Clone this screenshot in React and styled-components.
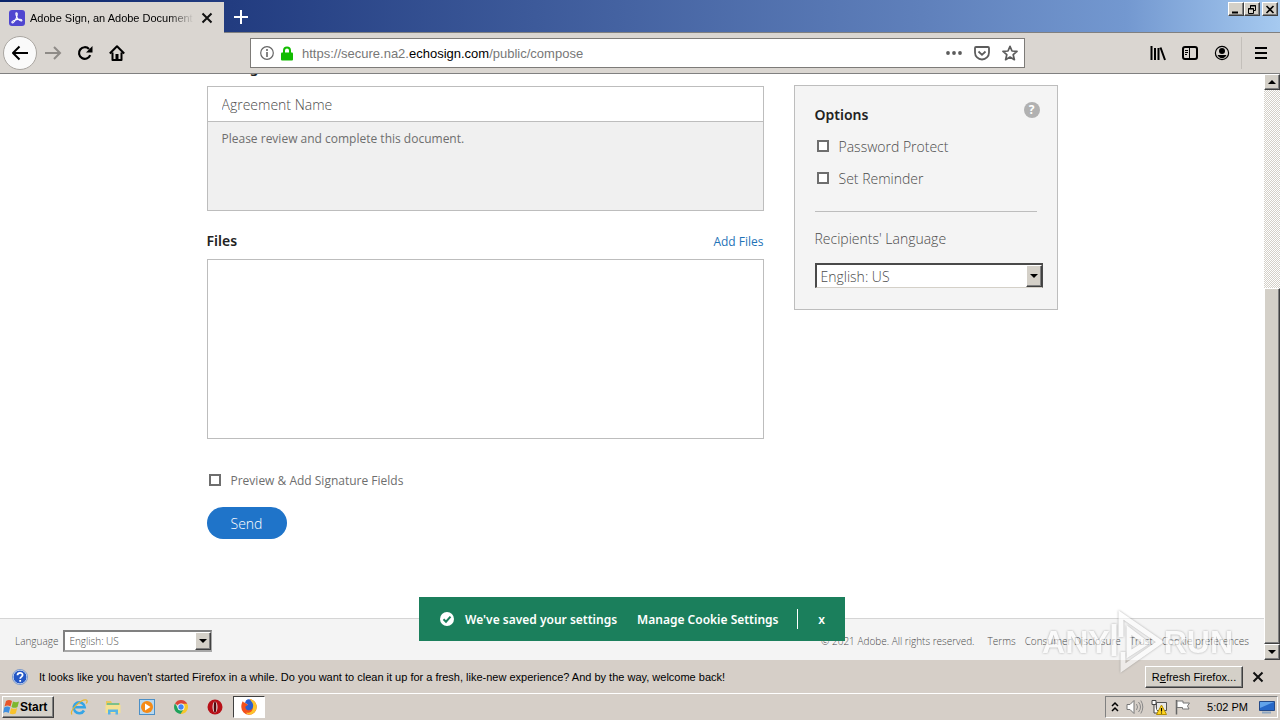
import React from "react";
import styled, { createGlobalStyle } from "styled-components";

const App = () => {
  return (
    <>
      <GlobalStyle />
      <Screen>
        <TitleBar>
          <Tab>
            <svg width="16" height="16" viewBox="0 0 16 16" aria-hidden="true">
              <rect width="16" height="16" rx="3" fill="#4f46d0" />
              <path
                d="M7.300 2.800c1.600 0 1 3.200-.3 5.900-1.200 2.400-2.700 4.600-3.900 4.100-1.100-.8 1.400-2.600 4.300-3.200 2.700-.6 5.400-.4 5.500.7.1 1.300-2.300.6-3.900-1.300C7.400 7.200 6.200 2.900 7.300 2.800z"
                fill="none"
                stroke="#fff"
                strokeWidth="1.100"
              />
            </svg>
            <TabTitle>Adobe Sign, an Adobe Document Cloud</TabTitle>
            <IconButton aria-label="Close tab" $size={16}>
              <CrossIcon />
            </IconButton>
          </Tab>
          <IconButton aria-label="New tab" $size={34}>
            <svg width="16" height="16" viewBox="0 0 16 16">
              <path d="M8 1v14M1 8h14" stroke="#fff" strokeWidth="2" />
            </svg>
          </IconButton>
          <WindowButtons>
            <WindowButton aria-label="Minimize">
              <svg width="10" height="9" viewBox="0 0 10 9">
                <path d="M1 7.500h6" stroke="#000" strokeWidth="2" />
              </svg>
            </WindowButton>
            <WindowButton aria-label="Restore">
              <svg width="10" height="9" viewBox="0 0 10 9">
                <path
                  d="M3.500 3V.5h5v5H7M3 1h6M1.500 3.500h5v5h-5zM1 4h6"
                  fill="none"
                  stroke="#000"
                />
              </svg>
            </WindowButton>
            <WindowButton aria-label="Close" $last>
              <svg width="10" height="9" viewBox="0 0 10 9">
                <path d="M1.500 1l7 7M8.500 1l-7 7" stroke="#000" strokeWidth="1.600" />
              </svg>
            </WindowButton>
          </WindowButtons>
        </TitleBar>

        <NavBar>
          <BackButton aria-label="Back">
            <svg width="18" height="18" viewBox="0 0 18 18">
              <path
                d="M17 9H2M8.500 2.500L2 9l6.500 6.500"
                fill="none"
                stroke="#000"
                strokeWidth="2"
                strokeLinejoin="round"
              />
            </svg>
          </BackButton>
          <IconButton aria-label="Forward" $size={32}>
            <svg width="18" height="18" viewBox="0 0 18 18">
              <path
                d="M1 9h15M10 3l6 6-6 6"
                fill="none"
                stroke="#8e8b87"
                strokeWidth="2"
              />
            </svg>
          </IconButton>
          <IconButton aria-label="Reload" $size={32}>
            <svg width="16" height="16" viewBox="0 0 16 16">
              <path
                d="M13.200 10.200A5.800 5.800 0 1 1 12 4"
                fill="none"
                stroke="#000"
                strokeWidth="2.200"
              />
              <path d="M15.500 1v6.500H9z" fill="#000" />
            </svg>
          </IconButton>
          <IconButton aria-label="Home" $size={32}>
            <svg width="16" height="16" viewBox="0 0 16 16">
              <path
                d="M.8 8.500L8 1.300l7.200 7.200M3.500 7.500V15h9V7.500"
                fill="none"
                stroke="#000"
                strokeWidth="2"
                strokeLinejoin="round"
              />
              <path d="M6.500 9h3v6h-3z" fill="#000" />
            </svg>
          </IconButton>
          <UrlBar>
            <svg width="14" height="14" viewBox="0 0 14 14" aria-hidden="true">
              <circle cx="7" cy="7" r="6.300" fill="none" stroke="#666" strokeWidth="1.200" />
              <path d="M7 6v5M7 3v2" stroke="#666" strokeWidth="1.600" />
            </svg>
            <svg width="14" height="15" viewBox="0 0 14 15" aria-hidden="true">
              <path d="M4 7V4.500a3 3 0 0 1 6 0V7" fill="none" stroke="#12bc00" strokeWidth="2" />
              <rect x="1" y="6.500" width="12" height="8" rx="1" fill="#12bc00" />
            </svg>
            <Url>
              https://secure.na2.<b>echosign.com</b>/public/compose
            </Url>
            <svg width="18" height="16" viewBox="0 0 18 16" aria-hidden="true">
              <g fill="#5c5c5c">
                <circle cx="4" cy="8" r="1.900" />
                <circle cx="10" cy="8" r="1.900" />
                <circle cx="16" cy="8" r="1.900" />
              </g>
            </svg>
            <svg width="16" height="16" viewBox="0 0 16 16" aria-hidden="true">
              <path
                d="M2 2h12a1 1 0 0 1 1 1v4.500a7 7 0 0 1-14 0V3a1 1 0 0 1 1-1zM4.500 6.500L8 9.800l3.500-3.300"
                fill="none"
                stroke="#5c5c5c"
                strokeWidth="1.800"
              />
            </svg>
            <svg width="16" height="16" viewBox="0 0 16 16" aria-hidden="true">
              <path
                d="M8 1.300l2 4.700 5 .4-3.800 3.300 1.200 5L8 12l-4.400 2.700 1.200-5L1 6.400 6 6z"
                fill="none"
                stroke="#5c5c5c"
                strokeWidth="1.700"
                strokeLinejoin="round"
              />
            </svg>
          </UrlBar>
          <NavTools>
            <IconButton aria-label="Library" $size={32}>
              <svg width="16" height="16" viewBox="0 0 16 16">
                <path d="M1.500 1v14M5 3v12M8.500 3v12M10.500 2.500L15 15" stroke="#000" strokeWidth="2" />
              </svg>
            </IconButton>
            <IconButton aria-label="Sidebars" $size={32}>
              <svg width="16" height="16" viewBox="0 0 16 16">
                <rect x="1" y="2" width="14" height="12" rx="2" fill="none" stroke="#000" strokeWidth="2" />
                <path d="M7.500 2v12" stroke="#000" />
                <path d="M3 5.500h3M3 7.500h3M3 9.500h2" stroke="#000" />
              </svg>
            </IconButton>
            <IconButton aria-label="Account" $size={32}>
              <svg width="16" height="16" viewBox="0 0 16 16">
                <circle cx="8" cy="8" r="6.600" fill="none" stroke="#000" strokeWidth="1.200" />
                <circle cx="8" cy="6" r="3" fill="#000" />
                <path d="M3.500 10h9c-.8 2-2.500 3.200-4.500 3.200S4.300 12 3.500 10z" fill="#000" />
              </svg>
            </IconButton>
            <NavDivider />
            <IconButton aria-label="Open menu" $size={32}>
              <svg width="14" height="14" viewBox="0 0 14 14">
                <path d="M1 2h12M1 7h12M1 12h12" stroke="#000" strokeWidth="2" />
              </svg>
            </IconButton>
          </NavTools>
        </NavBar>

        <Viewport>
          <Page>
            <Compose>
              <Column>
                <Heading>Message</Heading>
                <MessageBox>
                  <NameInput aria-label="Agreement Name" placeholder="Agreement Name" />
                  <MessageInput
                    aria-label="Message"
                    defaultValue="Please review and complete this document."
                  />
                </MessageBox>
                <FilesHeader>
                  <Heading>Files</Heading>
                  <AddLink href="#files">Add Files</AddLink>
                </FilesHeader>
                <FileDrop id="files" />
                <PreviewLabel>
                  <Checkbox type="checkbox" />
                  Preview &amp; Add Signature Fields
                </PreviewLabel>
                <SendButton>Send</SendButton>
              </Column>
              <Options>
                <OptionsHeader>
                  <Heading>Options</Heading>
                  <HelpButton aria-label="Help">?</HelpButton>
                </OptionsHeader>
                <OptionLabel>
                  <Checkbox type="checkbox" />
                  Password Protect
                </OptionLabel>
                <OptionLabel>
                  <Checkbox type="checkbox" />
                  Set Reminder
                </OptionLabel>
                <Rule />
                <FieldLabel htmlFor="recipient-language">Recipients' Language</FieldLabel>
                <SelectBox $large>
                  <select id="recipient-language">
                    <option>English: US</option>
                  </select>
                  <Arrow />
                </SelectBox>
              </Options>
            </Compose>
            <Footer>
              <label htmlFor="language">Language</label>
              <SelectBox>
                <select id="language">
                  <option>English: US</option>
                </select>
                <Arrow />
              </SelectBox>
              <Legal>
                <span>© 2021 Adobe. All rights reserved.</span>
                <a href="#terms">Terms</a>
                <a href="#disclosure">Consumer Disclosure</a>
                <a href="#trust">Trust</a>
                <a href="#cookies">Cookie preferences</a>
              </Legal>
            </Footer>
            <Toast>
              <svg width="14" height="14" viewBox="0 0 14 14" aria-hidden="true">
                <circle cx="7" cy="7" r="7" fill="#fff" />
                <path d="M3.500 7.200L6 9.700l4.500-5" fill="none" stroke="#1b7f5c" strokeWidth="2" />
              </svg>
              <span>We've saved your settings</span>
              <a href="#cookie-settings">Manage Cookie Settings</a>
              <ToastClose aria-label="Close">x</ToastClose>
            </Toast>
          </Page>
          <Scrollbar>
            <ScrollButton aria-label="Scroll up">
              <Triangle $up />
            </ScrollButton>
            <ScrollTrack />
            <ScrollThumb />
            <ScrollButton aria-label="Scroll down">
              <Triangle />
            </ScrollButton>
          </Scrollbar>
        </Viewport>

        <Notice>
          <svg width="16" height="16" viewBox="0 0 16 16" aria-hidden="true">
            <circle cx="8" cy="8" r="7" fill="#2457c5" stroke="#d9e5f8" />
            <circle cx="8" cy="8" r="7.600" fill="none" stroke="#6c8fc8" strokeWidth=".8" />
            <path
              d="M5.500 6.300c0-3.400 5.200-3.200 5.100-.2 0 1.900-2.400 1.700-2.400 3.700M8.200 11v1.800"
              fill="none"
              stroke="#fff"
              strokeWidth="1.800"
            />
          </svg>
          <NoticeText>
            It looks like you haven't started Firefox in a while. Do you want to clean it up for a
            fresh, like-new experience? And by the way, welcome back!
          </NoticeText>
          <RefreshButton>
            R<u>e</u>fresh Firefox...
          </RefreshButton>
          <IconButton aria-label="Dismiss" $size={30}>
            <CrossIcon />
          </IconButton>
        </Notice>

        <Taskbar>
          <StartButton>
            <svg width="17" height="16" viewBox="0 0 17 16" aria-hidden="true">
              <path d="M3 2q3-2 6 0L7.500 7.500q-3-1.800-6 0z" fill="#e8562a" />
              <path d="M10 2.500q3 1.600 6 0L14.500 8q-3 1.700-6 0z" fill="#7db72f" />
              <path d="M1.200 8.500q3-1.800 6 0L5.700 14q-3-1.800-5.500 0z" fill="#3f8fe0" />
              <path d="M8.200 9q3 1.700 6 0l-1.500 5.500q-3 1.600-6 0z" fill="#f8c22c" />
            </svg>
            Start
          </StartButton>
          <TaskButton aria-label="Internet Explorer">
            <svg width="18" height="18" viewBox="0 0 18 18">
              <path
                d="M14 12.500A5.500 5.500 0 1 1 14.700 9.300H5"
                fill="none"
                stroke="#35a5e6"
                strokeWidth="2.600"
              />
              <path
                d="M2 16.500C-1 13 11 .5 16.500 2c1 .5.800 2-.2 3.500"
                fill="none"
                stroke="#e8b62c"
                strokeWidth="1.200"
              />
            </svg>
          </TaskButton>
          <TaskButton aria-label="Explorer">
            <svg width="18" height="18" viewBox="0 0 18 18">
              <path d="M2 3h5l1 2h8v9H2z" fill="#e9c95c" />
              <path d="M3 5h12v4H3z" fill="#7cc08a" />
              <path d="M1.500 7h15v8h-15z" fill="#f5e191" />
              <path d="M4 16.500v-5h10v5h-2.500V14h-5v2.500z" fill="#58b4e4" />
            </svg>
          </TaskButton>
          <TaskButton aria-label="Media Player">
            <svg width="18" height="18" viewBox="0 0 18 18">
              <rect x="1.500" y="1.500" width="15" height="15" fill="#b8d8ef" stroke="#4c8fc6" />
              <circle cx="9" cy="9" r="6" fill="#f58a16" />
              <path d="M7 5.500l5.500 3.500L7 12.500z" fill="#fff" />
            </svg>
          </TaskButton>
          <TaskButton aria-label="Chrome">
            <svg width="18" height="18" viewBox="0 0 18 18">
              <path d="M9 9L3 5.500A7 7 0 0 1 15.200 5.800z" fill="#db4437" />
              <path d="M9 9L9 5.800h6.200A7 7 0 0 1 8.500 16z" fill="#f6c72c" />
              <path d="M3 5.500L6.500 11l5 .5L8.500 16A7 7 0 0 1 3 5.500z" fill="#1fa25b" />
              <circle cx="9" cy="9" r="3.500" fill="#fff" />
              <circle cx="9" cy="9" r="2.700" fill="#4285f4" />
            </svg>
          </TaskButton>
          <TaskButton aria-label="Opera">
            <svg width="18" height="18" viewBox="0 0 18 18">
              <circle cx="9" cy="9" r="7.500" fill="#b81018" />
              <ellipse cx="9" cy="9" rx="2.500" ry="5.500" fill="#e8dcdc" />
              <ellipse cx="9" cy="9" rx="1.300" ry="5.500" fill="#51080c" />
            </svg>
          </TaskButton>
          <TaskButton aria-label="Firefox" $active>
            <svg width="18" height="18" viewBox="0 0 18 18">
              <path
                d="M3 3c0 1 .8 1.500 2 1.800L8 6.500 10 1c4 .8 6.700 4 6.700 8a7.700 7.700 0 0 1-15.400 0C1.300 6.500 1.800 4.500 3 3z"
                fill="#f3501c"
              />
              <path
                d="M10 1c4 .8 6.700 4 6.700 8 0 3-2 6-5 7.200-3 .8-5-.2-6-1.700 4 1 7-1 7-4.500 0-2.500-1-3.500-2-4.500z"
                fill="#fcc52c"
              />
              <path
                d="M6 2.500C8 .8 10 1 11 3c2 2 2.500 4 2 6-.6 2.500-3 3.700-5 3.200-2-.5-3-2-2.500-3.700l2.800-1.700L5 4.800z"
                fill="#2b5fd0"
              />
            </svg>
          </TaskButton>
          <Tray>
            <svg width="8" height="12" viewBox="0 0 8 12" aria-hidden="true">
              <path d="M1 5l3-3 3 3M1 10l3-3 3 3" fill="none" stroke="#000" strokeWidth="1.500" />
            </svg>
            <svg width="18" height="16" viewBox="0 0 18 16" aria-hidden="true">
              <path d="M1 5.500h3l4-4v13l-4-4H1z" fill="#fff" stroke="#777" />
              <path d="M10.500 5q2 3 0 6M12.500 3q4 5 0 10M14.800 1.500q4 6.500 0 13" fill="none" stroke="#888" />
            </svg>
            <svg width="16" height="16" viewBox="0 0 16 16" aria-hidden="true">
              <path d="M5.500 3.500h10v8h-10z" fill="#e8e8e8" stroke="#555" />
              <path d="M1 1.500h4v4H1zM3 5.500V14h4" fill="#fff" stroke="#444" />
              <path d="M10.500 6l5 9.500h-10z" fill="#ffd51f" stroke="#b38c00" />
              <path d="M10.500 9v3.500M10.500 13.500v1" stroke="#000" strokeWidth="1.200" />
            </svg>
            <svg width="18" height="16" viewBox="0 0 18 16" aria-hidden="true">
              <path d="M2.500 1v14.500" stroke="#666" strokeWidth="1.500" />
              <path d="M3 2h6v2h6.500l-2 3 1.500 3H8.500V8.500H3z" fill="#fff" stroke="#777" />
            </svg>
            <Clock>5:02 PM</Clock>
            <svg width="16" height="16" viewBox="0 0 16 16" aria-hidden="true">
              <path d="M.5 2.500h15v9H.5z" fill="#2768c8" stroke="#254a88" />
              <path d="M1 3h14L1 9z" fill="#62a3ea" />
              <path d="M3 13.500h9" stroke="#8fa6c0" strokeWidth="2" />
            </svg>
          </Tray>
        </Taskbar>

        <Watermark>
          ANY
          <svg width="54" height="64" viewBox="0 0 54 64" aria-hidden="true">
            <path
              d="M4 14v32M11 27V5l39 27-37 26V42M19 20v24l17-11z"
              fill="none"
              stroke="#fff"
              strokeWidth="5"
            />
          </svg>
          RUN
        </Watermark>
      </Screen>
    </>
  );
};

const CrossIcon = () => (
  <svg width="12" height="12" viewBox="0 0 12 12">
    <path d="M1.500 1.500l9 9M10.500 1.500l-9 9" stroke="#111" strokeWidth="2" />
  </svg>
);

const GlobalStyle = createGlobalStyle`
  * {
    box-sizing: border-box;
  }
  body {
    margin: 0;
  }
  button, input, select, textarea {
    font: inherit;
    color: inherit;
    margin: 0;
    border-radius: 0;
  }
  a {
    color: inherit;
    text-decoration: none;
  }
  svg {
    flex: none;
    display: block;
  }
`;

const raised = `
  border: 1px solid;
  border-color: #fff #404040 #404040 #fff;
  box-shadow: inset -1px -1px #808080;
  background: #d4d0c8;
`;

const Screen = styled.div`
  position: relative;
  display: flex;
  flex-direction: column;
  height: 100vh;
  overflow: hidden;
  background: #d6cfc8;
  color: #000;
  font-family: "Liberation Sans", sans-serif;
  font-size: 11px;
`;

const TitleBar = styled.header`
  display: flex;
  flex: none;
  height: 33px;
  border-bottom: 1px solid #808080;
  background: linear-gradient(90deg, #0a246a 0%, #223c80 18%, #5f80bb 72%, #7398d0 88%, #a6caf0 100%);
`;

const Tab = styled.div`
  display: flex;
  align-items: center;
  width: 224px;
  height: 31px;
  margin-top: 2px;
  margin-bottom: -1px;
  padding: 0 9px;
  gap: 5px;
  background: #dad6d1;
`;

const TabTitle = styled.span`
  flex: 1;
  overflow: hidden;
  white-space: nowrap;
  mask-image: linear-gradient(90deg, #000 84%, transparent);
`;

const IconButton = styled.button`
  display: flex;
  flex: none;
  align-items: center;
  justify-content: center;
  width: ${({ $size }) => $size}px;
  height: ${({ $size }) => $size}px;
  padding: 0;
  border: none;
  background: none;
`;

const WindowButtons = styled.div`
  display: flex;
  margin-left: auto;
  padding: 2px 2px 0 0;
`;

const WindowButton = styled.button`
  ${raised}
  display: flex;
  align-items: center;
  justify-content: center;
  width: 16px;
  height: 14px;
  padding: 0;
  margin-left: ${({ $last }) => ($last ? "2px" : "0")};
`;

const NavBar = styled.nav`
  display: flex;
  flex: none;
  align-items: center;
  height: 41px;
  padding: 0 3px;
  border-bottom: 1px solid #808080;
  background: #dad6d1;
`;

const BackButton = styled.button`
  display: flex;
  align-items: center;
  justify-content: center;
  width: 34px;
  height: 34px;
  padding: 0;
  border: 1px solid #aaa6a1;
  border-radius: 50%;
  background: #fafafa;
`;

const UrlBar = styled.div`
  display: flex;
  align-items: center;
  flex: 0 1 775px;
  height: 30px;
  margin-left: 117px;
  padding: 0 6px 0 9px;
  gap: 6px;
  border: 1px solid #7d7b78;
  background: #fff;
  svg:nth-of-type(n + 4) {
    margin-left: 6px;
  }
`;

const Url = styled.span`
  flex: 1;
  padding-left: 2px;
  font-size: 13px;
  color: #777;
  b {
    font-weight: 400;
    color: #000;
  }
`;

const NavTools = styled.div`
  display: flex;
  align-items: center;
  margin-left: auto;
`;

const NavDivider = styled.div`
  width: 1px;
  height: 32px;
  margin: 0 3px;
  background: #c3bfba;
`;

const Viewport = styled.div`
  display: flex;
  flex: 1;
  min-height: 0;
  background: #fff;
`;

const Page = styled.div`
  position: relative;
  display: flex;
  flex: 1;
  flex-direction: column;
  overflow: hidden;
  font-family: "Open Sans", sans-serif;
  font-weight: 300;
  color: #4b4b4b;
`;

const Compose = styled.main`
  display: flex;
  flex: 1;
  align-items: flex-start;
  gap: 30px;
  width: 100%;
  max-width: 851px;
  min-height: 0;
  margin: 0 auto;
`;

const Column = styled.section`
  display: flex;
  flex: 1;
  flex-direction: column;
  align-items: stretch;
  margin-top: -16px;
`;

const Heading = styled.h2`
  margin: 0;
  font-family: "Noto Sans", sans-serif;
  font-size: 14px;
  line-height: 20px;
  font-weight: 600;
  color: #222;
`;

const MessageBox = styled.div`
  display: flex;
  flex-direction: column;
  height: 125px;
  margin-top: 8px;
  border: 1px solid #bdbdbd;
`;

const NameInput = styled.input`
  height: 35px;
  padding: 0 14px;
  border: none;
  border-bottom: 1px solid #bdbdbd;
  font-size: 14px;
  &::placeholder {
    color: #4b4b4b;
    opacity: 1;
  }
`;

const MessageInput = styled.textarea`
  flex: 1;
  padding: 7px 14px;
  border: none;
  resize: none;
  background: #f0f0f0;
  color: #6e6e6e;
  font-size: 12px;
  line-height: 20px;
  font-weight: 400;
`;

const FilesHeader = styled.div`
  display: flex;
  align-items: center;
  justify-content: space-between;
  margin-top: 20px;
`;

const AddLink = styled.a`
  font-size: 12px;
  font-weight: 400;
  color: #1f73b7;
`;

const FileDrop = styled.div`
  height: 180px;
  margin-top: 8px;
  border: 1px solid #bdbdbd;
`;

const OptionLabel = styled.label`
  display: flex;
  align-items: center;
  gap: 10px;
  height: 32px;
  padding-left: 2px;
  font-size: 14px;
`;

const PreviewLabel = styled(OptionLabel)`
  margin-top: 25px;
  color: #6e6e6e;
  font-size: 12px;
  font-weight: 400;
`;

const Checkbox = styled.input`
  appearance: none;
  width: 12px;
  height: 12px;
  border: 2px solid #6e6e6e;
  background: #fff;
`;

const SendButton = styled.button`
  align-self: flex-start;
  width: 80px;
  height: 32px;
  margin-top: 11px;
  border: none;
  border-radius: 16px;
  background: #1f74c9;
  color: #fff;
  font-size: 14px;
`;

const Options = styled.aside`
  width: 264px;
  height: 225px;
  margin-top: 11px;
  padding: 14px 14px 0 20px;
  border: 1px solid #bdbdbd;
  background: #f4f4f4;
`;

const OptionsHeader = styled.div`
  display: flex;
  align-items: center;
  justify-content: space-between;
  height: 30px;
  padding-right: 3px;
`;

const HelpButton = styled.button`
  width: 16px;
  height: 16px;
  padding: 0;
  margin-bottom: 10px;
  border: none;
  border-radius: 50%;
  background: #b1b1b1;
  color: #fff;
  font-size: 12px;
  line-height: 16px;
  font-weight: 700;
`;

const Rule = styled.hr`
  margin: 17px 6px 16px 0;
  border: none;
  border-top: 1px solid #bdbdbd;
`;

const FieldLabel = styled.label`
  display: block;
  margin-bottom: 13px;
  font-size: 14px;
  line-height: 22px;
`;

const SelectBox = styled.div`
  position: relative;
  width: ${({ $large }) => ($large ? "100%" : "149px")};
  height: ${({ $large }) => ($large ? "25px" : "22px")};
  border: 2px solid;
  border-color: ${({ $large }) =>
    $large ? "#4a4a4a #4a4a4a #d4d0c8 #4a4a4a" : "#808080 #a8a8a8 #a8a8a8 #808080"};
  border-right-width: 1px;
  border-bottom-width: ${({ $large }) => ($large ? "1px" : "2px")};
  background: #fff;
  font-size: ${({ $large }) => ($large ? "14px" : "10px")};
  select {
    display: block;
    appearance: none;
    width: 100%;
    height: 100%;
    padding: 0 4px;
    border: none;
    background: transparent;
  }
`;

const Arrow = styled.span`
  ${raised}
  position: absolute;
  top: 0;
  right: 0;
  bottom: 0;
  display: flex;
  align-items: center;
  justify-content: center;
  width: 16px;
  pointer-events: none;
  &::after {
    content: "";
    border: 4px solid transparent;
    border-top-color: #000;
    border-bottom: none;
  }
`;

const Footer = styled.footer`
  display: flex;
  flex: none;
  align-items: center;
  gap: 5px;
  height: 42px;
  padding: 3px 15px 0;
  border-top: 1px solid #d5d5d5;
  background: #f4f4f4;
  font-size: 10px;
`;

const Legal = styled.div`
  display: flex;
  gap: 9px;
  margin-left: auto;
  span {
    margin-right: 4px;
  }
`;

const Toast = styled.div`
  position: absolute;
  bottom: 19px;
  left: 50%;
  display: flex;
  align-items: center;
  width: 426px;
  height: 44px;
  padding-left: 21px;
  transform: translateX(-50%);
  background: #1b7f5c;
  color: #fff;
  font-family: "Noto Sans", sans-serif;
  font-size: 12px;
  font-weight: 600;
  white-space: nowrap;
  span {
    margin: 0 20px 0 11px;
  }
`;

const ToastClose = styled.button`
  width: 48px;
  height: 20px;
  padding: 0;
  margin-left: auto;
  border: none;
  border-left: 1px solid #fff;
  background: none;
`;

const Scrollbar = styled.div`
  display: flex;
  flex: none;
  flex-direction: column;
  width: 16px;
`;

const ScrollButton = styled.button`
  ${raised}
  display: flex;
  align-items: center;
  justify-content: center;
  width: 16px;
  height: 16px;
  padding: 0;
`;

const ScrollTrack = styled.div`
  flex: 199;
  background: repeating-conic-gradient(#d4d0c8 0 25%, #fff 0 50%) 0 0 / 2px 2px;
`;

const ScrollThumb = styled.div`
  ${raised}
  flex: 355;
`;

const Triangle = styled.span`
  border: 4px solid transparent;
  ${({ $up }) =>
    $up
      ? "border-bottom-color: #000; border-top: none;"
      : "border-top-color: #000; border-bottom: none;"}
`;

const Notice = styled.div`
  display: flex;
  flex: none;
  align-items: center;
  height: 33px;
  padding: 0 7px 0 12px;
`;

const NoticeText = styled.span`
  flex: 1;
  padding-left: 11px;
  white-space: nowrap;
`;

const RefreshButton = styled.button`
  ${raised}
  width: 98px;
  height: 22px;
  padding: 0;
`;

const Taskbar = styled.footer`
  display: flex;
  flex: none;
  align-items: center;
  height: 27px;
  border-top: 1px solid #fff;
  padding: 0 2px;
`;

const StartButton = styled.button`
  ${raised}
  display: flex;
  align-items: center;
  width: 52px;
  height: 22px;
  margin-right: 9px;
  padding: 0;
  font-size: 12px;
  font-weight: 700;
`;

const TaskButton = styled.button`
  display: flex;
  align-items: center;
  justify-content: center;
  width: 32px;
  height: 22px;
  margin-right: 2px;
  padding: 0;
  border: 1px solid;
  border-color: ${({ $active }) => ($active ? "#404040 #fff #fff #404040" : "transparent")};
  background: ${({ $active }) => ($active ? "#fff" : "none")};
`;

const Tray = styled.div`
  display: flex;
  align-items: center;
  gap: 7px;
  height: 22px;
  margin-left: auto;
  padding: 0 2px 0 5px;
  border: 1px solid;
  border-color: #808080 #fff #fff #808080;
`;

const Clock = styled.time`
  padding: 0 4px 0 8px;
`;

const Watermark = styled.div`
  position: absolute;
  right: 47px;
  bottom: 46px;
  display: flex;
  align-items: center;
  color: #fff;
  font-size: 32px;
  font-weight: 700;
  opacity: 0.6;
  filter: drop-shadow(0 0 1px #777);
  pointer-events: none;
`;

export default App;
